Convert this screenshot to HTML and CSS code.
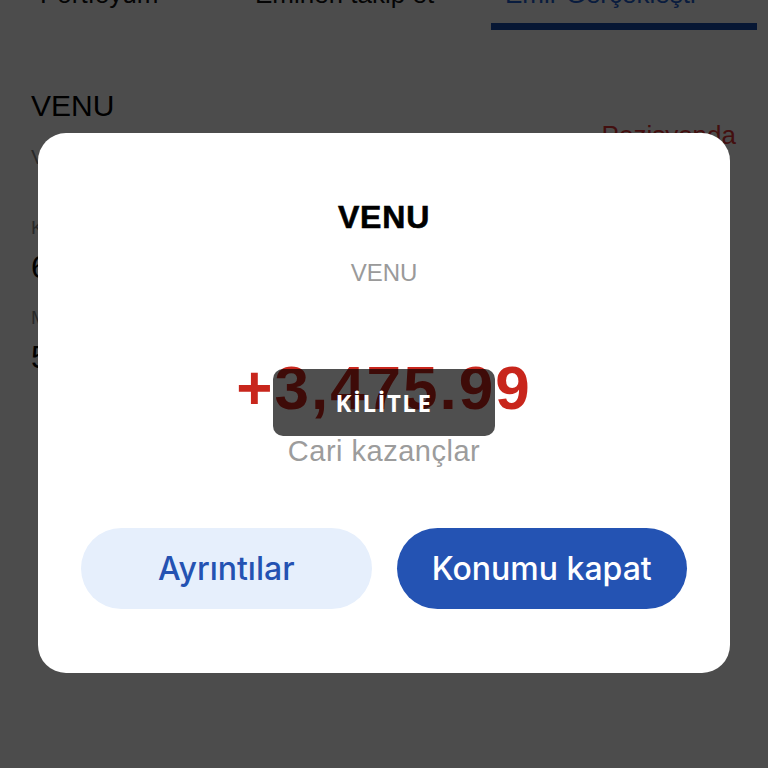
FILE: index.html
```html
<!DOCTYPE html>
<html lang="tr">
<head>
<meta charset="utf-8">
<title>VENU</title>
<link rel="stylesheet" href="styles.css">
</head>
<body>
<div class="page">
  <nav class="tabs">
    <div class="tab tab-1">Portföyüm</div>
    <div class="tab tab-2">Emirleri takip et</div>
    <div class="tab tab-3 active">Emir Gerçekleşti<span class="tab-line"></span></div>
  </nav>
  <section class="stock">
    <div class="stock-head">
      <div class="stock-names">
        <h1 class="stock-code">VENU</h1>
        <p class="stock-sub">VENU Holdings</p>
      </div>
      <span class="status">Pozisyonda</span>
    </div>
    <div class="field">
      <span class="label">Kalan adet</span>
      <span class="value">600</span>
    </div>
    <div class="field">
      <span class="label">Maliyet</span>
      <span class="value">5.20</span>
    </div>
  </section>
</div>

<div class="overlay">
  <div class="modal">
    <h2 class="modal-title">VENU</h2>
    <p class="modal-sub">VENU</p>
    <div class="amount">
      <div class="amount-value">+3,475.99</div>
      <div class="toast">KİLİTLE</div>
    </div>
    <p class="amount-label">Cari kazançlar</p>
    <div class="actions">
      <button class="btn btn-light">Ayrıntılar</button>
      <button class="btn btn-primary">Konumu kapat</button>
    </div>
  </div>
</div>
</body>
</html>
```
FILE: styles.css
```css
* { box-sizing: border-box; }
html, body {
  margin: 0;
  padding: 0;
  width: 768px;
  height: 768px;
  overflow: hidden;
  background: #ffffff;
  font-family: "Liberation Sans", Arial, sans-serif;
}

/* ---------- background page ---------- */
.page {
  padding: 0 32px 0 31px;
}
.tabs {
  display: flex;
  margin: -21px -32px 0 -31px;
  font-size: 26px;
  line-height: 30px;
  color: #111;
}
.tab {
  position: relative;
  height: 51px;
}
.tab-1 { width: 255px; padding-left: 40px; }
.tab-2 { width: 236px; padding-left: 0; }
.tab-3 { width: 277px; padding-left: 14px; color: #1f5fd0; }
.tab-line {
  position: absolute;
  left: 0;
  top: 44px;
  width: 266px;
  height: 7px;
  background: #1a4fb0;
}
.stock {
  padding-top: 58px;
}
.stock-head {
  display: flex;
  justify-content: space-between;
  align-items: flex-start;
}
.stock-code {
  margin: 0;
  font-size: 30px;
  line-height: 36px;
  font-weight: 400;
  color: #000;
}
.stock-sub {
  margin: 20px 0 0;
  font-size: 21px;
  line-height: 26px;
  color: #888;
}
.status {
  margin-top: 32px;
  font-size: 26px;
  line-height: 30px;
  color: #e03434;
}
.field {
  display: flex;
  flex-direction: column;
  margin-top: 46px;
}
.field + .field { margin-top: 20px; }
.label {
  font-size: 19px;
  line-height: 24px;
  color: #888;
}
.value {
  margin-top: 8px;
  font-size: 32px;
  line-height: 38px;
  color: #000;
}

/* ---------- overlay & modal ---------- */
.overlay {
  position: fixed;
  inset: 0;
  background: rgba(0, 0, 0, 0.7);
  display: flex;
  justify-content: center;
  align-items: flex-start;
  padding: 133px 38px 0;
}
.modal {
  width: 692px;
  height: 540px;
  background: #ffffff;
  border-radius: 28px;
  padding: 64px 43px 0;
  display: flex;
  flex-direction: column;
  align-items: center;
}
.modal-title {
  margin: 0;
  font-size: 32px;
  line-height: 40px;
  font-weight: 700;
  color: #000;
  letter-spacing: 0.8px;
  -webkit-text-stroke: 0.6px #000;
}
.modal-sub {
  margin: 21px 0 0;
  font-size: 24px;
  line-height: 30px;
  color: #9a9a9a;
}
.amount {
  position: relative;
  margin-top: 65px;
}
.amount-value {
  font-size: 62px;
  line-height: 70px;
  font-weight: 700;
  color: #c8261c;
  letter-spacing: 2px;
}
.toast {
  position: absolute;
  left: 50%;
  top: 16px;
  width: 222px;
  height: 67px;
  margin-left: -111px;
  border-radius: 10px;
  background: rgba(0, 0, 0, 0.69);
  display: flex;
  align-items: center;
  justify-content: center;
  font-family: "Open Sans", "Noto Sans", sans-serif;
  font-weight: 700;
  font-size: 24px;
  letter-spacing: 1.5px;
  color: #ffffff;
}
.amount-label {
  margin: 10px 0 0;
  font-size: 29px;
  line-height: 36px;
  color: #9c9c9c;
  letter-spacing: 0.5px;
}
.actions {
  margin-top: 59px;
  width: 100%;
  display: flex;
  gap: 25px;
}
.btn {
  flex: 1;
  height: 81px;
  border: none;
  border-radius: 41px;
  font-family: Inter, "Noto Sans", sans-serif;
  font-weight: 500;
  font-size: 32px;
  padding: 0;
}
.btn-light {
  background: #e6effc;
  color: #2452b2;
}
.btn-primary {
  background: #2453b3;
  color: #ffffff;
}
```
